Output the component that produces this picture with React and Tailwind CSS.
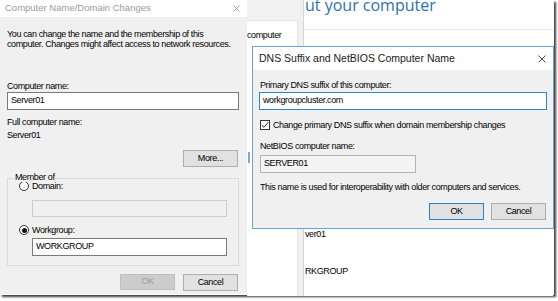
import React from "react";

const CloseX = ({ size = 8, color = "#333" }) => (
  <svg width={size} height={size} viewBox="0 0 8 8" fill="none">
    <path d="M0.5 0.5L7.5 7.5M7.5 0.5L0.5 7.5" stroke={color} strokeWidth="0.9" />
  </svg>
);

const Radio = ({ checked }) => (
  <span className="w-[10px] h-[10px] rounded-full border border-[#333] bg-white flex items-center justify-center shrink-0">
    {checked && <span className="w-[5px] h-[5px] rounded-full bg-[#111]" />}
  </span>
);

const Button = ({ children, primary, disabled }) => (
  <div
    className={
      "w-[55px] flex items-center justify-center border " +
      (disabled
        ? "h-[16px] bg-[#cccccc] border-[#bfbfbf] text-[#9d9d9d]"
        : primary
        ? "h-[17px] bg-[#e1e1e1] border-[#2d7fcf] text-black"
        : "h-[17px] bg-[#e1e1e1] border-[#adadad] text-black")
    }
  >
    {children}
  </div>
);

/* ---------------- Background window ---------------- */

const BackWindow = () => (
  <div className="absolute left-[247px] top-0 w-[306px] h-[296px] bg-white flex">
    {/* nav column */}
    <div className="w-[51px] flex flex-col bg-[#f2f2f2]">
      <div className="h-[20px]" />
      <div className="flex-1 bg-white border-t border-r border-[#e2e2e2] relative">
        <p className="mt-[9px] leading-[10px]">computer</p>
        <span className="absolute left-[1px] top-[131px] w-[2px] h-[11px] bg-[#7fa6d4]" />
      </div>
    </div>
    {/* separator band */}
    <div className="w-[6px] bg-[#f0f0f0] border-r border-[#d6d6d6]" />
    {/* main area */}
    <div className="flex-1 flex flex-col overflow-hidden">
      <div className="h-[30px] border-b border-[#e4e4e4] overflow-hidden">
        <p className="-mt-[3px] ml-[1px] text-[16px] leading-[16px] text-[#2f6fb3] font-['Open_Sans',sans-serif] tracking-normal">
          ut your computer
        </p>
      </div>
      <p className="mt-[199px] ml-[1px] leading-[10px]">ver01</p>
      <p className="mt-[27px] ml-[1px] leading-[10px]">RKGROUP</p>
    </div>
  </div>
);

/* ---------------- Computer Name/Domain Changes ---------------- */

const NameDialog = () => (
  <div className="absolute left-0 top-0 w-[247px] h-[294px] flex flex-col bg-[#f0f0f0]">
    <div className="h-[17px] bg-white flex items-center justify-between pl-[5px] pr-[7px]">
      <span className="text-[9.5px] tracking-normal text-[#9a9a9a]">Computer Name/Domain Changes</span>
      <CloseX size={7} color="#8a8a8a" />
    </div>

    <div className="flex flex-col px-[7px] pr-[8px]">
      <p className="mt-[12px] leading-[10px] whitespace-nowrap">
        You can change the name and the membership of this
        <br />
        computer. Changes might affect access to network resources.
      </p>

      <p className="mt-[32px] leading-[10px]">Computer name:</p>
      <div className="mt-[1px] h-[18px] bg-white border border-[#7a7a7a] flex items-center px-[3px]">
        Server01
      </div>

      <p className="mt-[7px] leading-[10px]">Full computer name:</p>
      <p className="mt-[3px] leading-[10px]">Server01</p>

      <div className="mt-[10px] flex justify-end pr-[1px]">
        <Button>More...</Button>
      </div>

      {/* Member of group */}
      <div className="mt-[11px] h-[88px] relative border border-[#dadada] pt-[2px] pr-[11px]">
        <span className="absolute -top-[6px] left-[6px] px-[1px] leading-[9px] bg-[#f0f0f0]">
          Member of
        </span>
        <div className="flex items-center gap-[3px] ml-[11px] h-[10px]">
          <Radio />
          <span className="leading-[10px]">Domain:</span>
        </div>
        <div className="mt-[9px] ml-[24px] h-[17px] bg-[#f0f0f0] border border-[#cccccc]" />
        <div className="mt-[8px] flex items-center gap-[3px] ml-[11px] h-[10px]">
          <Radio checked />
          <span className="leading-[10px]">Workgroup:</span>
        </div>
        <div className="mt-[3px] ml-[24px] h-[18px] bg-white border border-[#7a7a7a] flex items-center px-[3px]">
          WORKGROUP
        </div>
      </div>

      <div className="mt-[8px] flex justify-end gap-[8px] pr-[1px]">
        <Button disabled>OK</Button>
        <Button>Cancel</Button>
      </div>
    </div>
  </div>
);

/* ---------------- DNS Suffix and NetBIOS Computer Name ---------------- */

const DnsDialog = () => (
  <div className="absolute left-[252px] top-[46px] w-[302px] h-[183px] border border-[#6aa3d6] bg-[#f0f0f0] flex flex-col">
    <div className="h-[23px] bg-white flex items-center justify-between pl-[6px] pr-[7px]">
      <span className="text-[10.5px] tracking-normal text-[#1a1a1a]">DNS Suffix and NetBIOS Computer Name</span>
      <CloseX size={8} color="#333" />
    </div>

    <div className="flex flex-col">
      <p className="mt-[10px] ml-[7px] leading-[10px]">Primary DNS suffix of this computer:</p>
      <div className="mt-[2px] mx-[6px] h-[18px] bg-white border border-[#2f82d0] flex items-center px-[3px]">
        workgroupcluster.com
      </div>

      <div className="mt-[10px] ml-[7px] h-[10px] flex items-center gap-[3px]">
        <span className="w-[10px] h-[10px] border border-[#333] bg-white flex items-center justify-center">
          <svg width="8" height="8" viewBox="0 0 8 8" fill="none">
            <path d="M0.8 4.2L3 6.3L7.2 1.2" stroke="#222" strokeWidth="1" />
          </svg>
        </span>
        <span className="leading-[10px]">Change primary DNS suffix when domain membership changes</span>
      </div>

      <p className="mt-[11px] ml-[7px] leading-[10px]">NetBIOS computer name:</p>
      <div className="mt-[4px] ml-[7px] w-[156px] h-[18px] bg-[#f4f4f4] border border-[#b4b4b4] flex items-center px-[3px]">
        SERVER01
      </div>

      <p className="mt-[9px] ml-[7px] leading-[10px]">
        This name is used for interoperability with older computers and services.
      </p>

      <div className="mt-[11px] mr-[7px] flex justify-end gap-[7px]">
        <Button primary>OK</Button>
        <Button>Cancel</Button>
      </div>
    </div>
  </div>
);

export default function App() {
  return (
    <div className="relative w-[558px] h-[301px] bg-white overflow-hidden text-[9px] tracking-[-0.38px] text-black font-['Liberation_Sans',sans-serif]">
      <div className="absolute left-0 top-0 w-[554px] h-[295px] bg-white shadow-[2px_2px_2px_rgba(0,0,0,0.75)]">
        <BackWindow />
        <NameDialog />
        <DnsDialog />
      </div>
    </div>
  );
}
